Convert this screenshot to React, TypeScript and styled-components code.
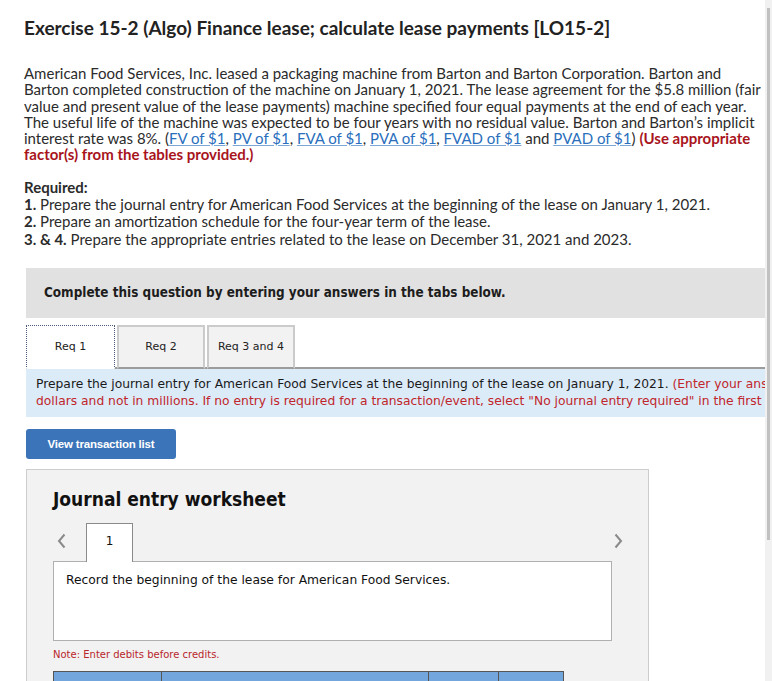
import { ReactElement } from 'react';
import styled, { createGlobalStyle } from 'styled-components';

const GlobalStyle = createGlobalStyle`
  html, body {
    margin: 0;
    padding: 0;
    background: #ffffff;
    overflow: hidden;
  }
`;

const bodyFont = `Lato, "Open Sans", sans-serif`;
const uiFont = `"DejaVu Sans", Verdana, sans-serif`;
const uiBoldFont = `"DejaVu Sans Condensed", "DejaVu Sans", sans-serif`;

const Styled = {
  Frame: styled.div`
    display: flex;
    width: 772px;
    height: 681px;
    overflow: hidden;
  `,
  Page: styled.main`
    flex: 1;
    min-width: 0;
    overflow: hidden;
    padding: 16px 0 0 24px;
    box-sizing: border-box;
    color: #2b2b2b;
    font-family: ${bodyFont};
  `,
  Scrollbar: styled.div`
    width: 7px;
    flex: none;
    background: #f1f1f1;
    padding: 8px 2px 0 2px;
    box-sizing: border-box;
  `,
  Thumb: styled.div`
    height: 532px;
    background: #c1c1c1;
  `,
  Title: styled.h1`
    margin: 0;
    font-size: 19px;
    line-height: 23px;
    font-weight: 700;
    color: #222;
    white-space: nowrap;
  `,
  Paragraph: styled.p`
    margin: 26px 0 0 0;
    font-size: 15px;
    line-height: 16.3px;
    white-space: nowrap;
  `,
  Line: styled.span`
    display: block;
  `,
  Link: styled.a`
    color: #2a6fbd;
    text-decoration: underline;
    text-decoration-color: #7aa6d8;
  `,
  Warn: styled.strong`
    color: #a8141c;
    font-weight: 700;
  `,
  Required: styled.div`
    margin-top: 16px;
    font-size: 15px;
    line-height: 17.3px;
    white-space: nowrap;
  `,
  QuestionBox: styled.div`
    margin: 20px 0 0 2px;
    width: 800px;
    height: 50px;
    background: #e1e1e1;
    display: flex;
    align-items: center;
    padding-left: 18px;
    box-sizing: border-box;
    font-family: ${uiBoldFont};
    font-size: 13.4px;
    font-weight: 700;
    color: #1d1d1d;
  `,
  TabRow: styled.div`
    margin: 7px 0 0 2px;
    width: 800px;
    display: flex;
    gap: 2px;
    border-bottom: 2px solid #9c9c9c;
  `,
  Tab: styled.button<{ $active?: boolean }>`
    width: ${({ $active }) => ($active ? '89px' : '88px')};
    height: 44px;
    margin-bottom: -2px;
    padding: 0;
    font-family: ${uiFont};
    font-size: 11px;
    color: #222;
    background: ${({ $active }) => ($active ? '#ffffff' : '#f2f2f2')};
    border: ${({ $active }) =>
      $active ? '1px dotted #4a5a7a' : '2px solid #cbcbcb'};
    border-bottom: ${({ $active }) =>
      $active ? '2px solid #ffffff' : '2px solid #9c9c9c'};
    cursor: pointer;
  `,
  Instructions: styled.div`
    margin-left: 2px;
    width: 800px;
    height: 48px;
    box-sizing: border-box;
    padding: 7px 0 0 10px;
    background: #dcebf8;
    font-family: ${uiFont};
    font-size: 12.3px;
    line-height: 17px;
    color: #1a1a1a;
    white-space: nowrap;
  `,
  Red: styled.span`
    color: #c0262b;
  `,
  Button: styled.button`
    display: block;
    margin: 12px 0 0 2px;
    width: 150px;
    height: 30px;
    border: none;
    border-radius: 3px;
    background: #3b74b9;
    color: #ffffff;
    font-family: "Liberation Sans", Arial, sans-serif;
    font-size: 11.5px;
    font-weight: 700;
    letter-spacing: -0.2px;
    cursor: pointer;
  `,
  Panel: styled.section`
    margin: 10px 0 0 2px;
    width: 623px;
    height: 260px;
    box-sizing: border-box;
    padding: 18px 0 0 26px;
    background: #f2f2f2;
    border: 1px solid #cdcdcd;
  `,
  PanelTitle: styled.h2`
    margin: 0;
    font-family: ${uiBoldFont};
    font-size: 19px;
    line-height: 22px;
    font-weight: 700;
    color: #111;
  `,
  EntryNav: styled.div`
    margin-top: 12px;
    width: 570px;
    display: flex;
    align-items: flex-end;
  `,
  Chevron: styled.span`
    display: flex;
    align-items: center;
    height: 39px;
    width: 33px;
    padding-left: 4px;
    box-sizing: border-box;
    color: #8a8a8a;
  `,
  ChevronRight: styled.span`
    margin-left: auto;
    display: flex;
    align-items: center;
    height: 39px;
    color: #8a8a8a;
  `,
  EntryTab: styled.div`
    width: 47px;
    height: 39px;
    box-sizing: border-box;
    margin-bottom: -1px;
    padding-top: 10px;
    text-align: center;
    background: #ffffff;
    border: 1px solid #8a8a8a;
    border-bottom: none;
    font-family: ${uiFont};
    font-size: 12px;
    color: #111;
  `,
  RecordBox: styled.div`
    width: 559px;
    height: 80px;
    box-sizing: border-box;
    padding: 11px 0 0 12px;
    background: #ffffff;
    border: 1px solid #b0b0b0;
    font-family: ${uiFont};
    font-size: 12.3px;
    color: #111;
  `,
  Note: styled.p`
    margin: 8px 0 0 0;
    font-family: ${uiFont};
    font-size: 10px;
    color: #b8262b;
  `,
  Table: styled.div`
    margin-top: 11px;
    display: grid;
    grid-template-columns: 109px 267px 70px 65px;
    width: 511px;
  `,
  HeadCell: styled.div`
    height: 30px;
    background: #72a6dc;
    border: 1px solid #555;
    border-left: none;
    &:first-child {
      border-left: 1px solid #555;
    }
  `,
};

const ChevronIcon = ({ dir }: { dir: 'left' | 'right' }): ReactElement => (
  <svg width="9" height="16" viewBox="0 0 9 16" fill="none">
    <path
      d={dir === 'left' ? 'M7.5 1.5 L2 8 L7.5 14.5' : 'M1.5 1.5 L7 8 L1.5 14.5'}
      stroke="currentColor"
      strokeWidth="2"
    />
  </svg>
);

export default function App(): ReactElement {
  return (
    <>
      <GlobalStyle />
      <Styled.Frame>
        <Styled.Page>
          <Styled.Title>
            Exercise 15-2 (Algo) Finance lease; calculate lease payments [LO15-2]
          </Styled.Title>
          <Styled.Paragraph>
            <Styled.Line>
              American Food Services, Inc. leased a packaging machine from Barton and Barton Corporation. Barton and
            </Styled.Line>
            <Styled.Line>
              Barton completed construction of the machine on January 1, 2021. The lease agreement for the $5.8 million (fair
            </Styled.Line>
            <Styled.Line>
              value and present value of the lease payments) machine specified four equal payments at the end of each year.
            </Styled.Line>
            <Styled.Line>
              The useful life of the machine was expected to be four years with no residual value. Barton and Barton’s implicit
            </Styled.Line>
            <Styled.Line>
              interest rate was 8%. (<Styled.Link href="#">FV of $1</Styled.Link>,{' '}
              <Styled.Link href="#">PV of $1</Styled.Link>,{' '}
              <Styled.Link href="#">FVA of $1</Styled.Link>,{' '}
              <Styled.Link href="#">PVA of $1</Styled.Link>,{' '}
              <Styled.Link href="#">FVAD of $1</Styled.Link> and{' '}
              <Styled.Link href="#">PVAD of $1</Styled.Link>){' '}
              <Styled.Warn>(Use appropriate</Styled.Warn>
            </Styled.Line>
            <Styled.Line>
              <Styled.Warn>factor(s) from the tables provided.)</Styled.Warn>
            </Styled.Line>
          </Styled.Paragraph>
          <Styled.Required>
            <Styled.Line>
              <strong>Required:</strong>
            </Styled.Line>
            <Styled.Line>
              <strong>1.</strong> Prepare the journal entry for American Food Services at the beginning of the lease on January 1, 2021.
            </Styled.Line>
            <Styled.Line>
              <strong>2.</strong> Prepare an amortization schedule for the four-year term of the lease.
            </Styled.Line>
            <Styled.Line>
              <strong>3. &amp; 4.</strong> Prepare the appropriate entries related to the lease on December 31, 2021 and 2023.
            </Styled.Line>
          </Styled.Required>
          <Styled.QuestionBox>
            Complete this question by entering your answers in the tabs below.
          </Styled.QuestionBox>
          <Styled.TabRow>
            <Styled.Tab $active>Req 1</Styled.Tab>
            <Styled.Tab>Req 2</Styled.Tab>
            <Styled.Tab>Req 3 and 4</Styled.Tab>
          </Styled.TabRow>
          <Styled.Instructions>
            <Styled.Line>
              Prepare the journal entry for American Food Services at the beginning of the lease on January 1, 2021.{' '}
              <Styled.Red>(Enter your answers in whole</Styled.Red>
            </Styled.Line>
            <Styled.Line>
              <Styled.Red>
                dollars and not in millions. If no entry is required for a transaction/event, select "No journal entry required" in the first account field.)
              </Styled.Red>
            </Styled.Line>
          </Styled.Instructions>
          <Styled.Button>View transaction list</Styled.Button>
          <Styled.Panel>
            <Styled.PanelTitle>Journal entry worksheet</Styled.PanelTitle>
            <Styled.EntryNav>
              <Styled.Chevron>
                <ChevronIcon dir="left" />
              </Styled.Chevron>
              <Styled.EntryTab>1</Styled.EntryTab>
              <Styled.ChevronRight>
                <ChevronIcon dir="right" />
              </Styled.ChevronRight>
            </Styled.EntryNav>
            <Styled.RecordBox>
              Record the beginning of the lease for American Food Services.
            </Styled.RecordBox>
            <Styled.Note>Note: Enter debits before credits.</Styled.Note>
            <Styled.Table>
              <Styled.HeadCell />
              <Styled.HeadCell />
              <Styled.HeadCell />
              <Styled.HeadCell />
            </Styled.Table>
          </Styled.Panel>
        </Styled.Page>
        <Styled.Scrollbar>
          <Styled.Thumb />
        </Styled.Scrollbar>
      </Styled.Frame>
    </>
  );
}
